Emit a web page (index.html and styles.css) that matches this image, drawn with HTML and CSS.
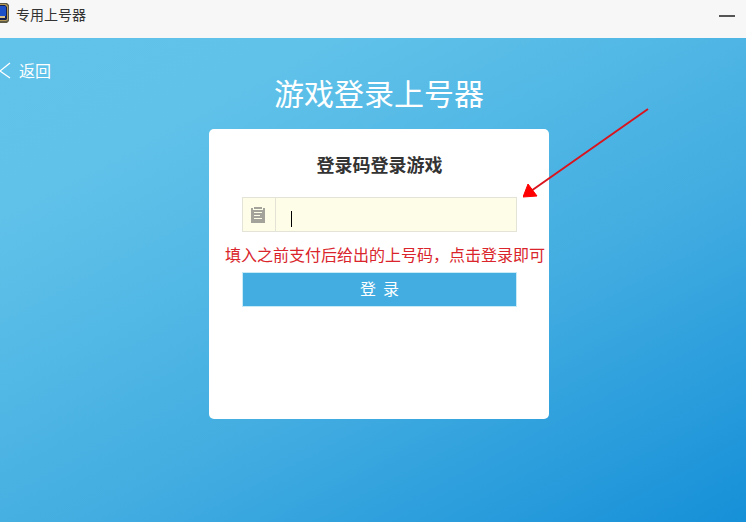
FILE: index.html
```html
<!DOCTYPE html>
<html lang="zh-CN">
<head>
  <meta charset="UTF-8">
  <meta name="viewport" content="width=device-width, initial-scale=1">
  <title>专用上号器</title>
  <link rel="stylesheet" href="styles.css">
</head>
<body>

  <header class="titlebar">
    <svg class="app-icon" width="10" height="22" viewBox="0 0 10 22" aria-hidden="true">
      <path d="M0 1h7l2 2v16l-2 2H0z" fill="#5d5a48"/>
      <path d="M0 2h6l2 2v14l-2 1H0z" fill="#b59a55"/>
      <path d="M0 3h5l2 2v12l-1 1H0z" fill="#15204f"/>
      <path d="M0 4h5l1 1v9H0z" fill="#1c50c8"/>
      <path d="M0 14h5v2H0z" fill="#d8c48a"/>
    </svg>
    <span class="app-name">专用上号器</span>
    <button class="minimize" type="button" aria-label="最小化"></button>
  </header>

  <main class="page">
    <a class="back" href="#">
      <svg width="11" height="18" viewBox="0 0 11 18" aria-hidden="true">
        <path d="M10 2L0 10l10 7" fill="none" stroke="#fff" stroke-width="1.3"/>
      </svg>
      返回
    </a>

    <div class="content">
      <h1>游戏登录上号器</h1>

      <form class="card">
        <h2><label for="code">登录码登录游戏</label></h2>

        <div class="field">
          <span class="field-icon">
            <svg width="16" height="16" viewBox="0 0 16 16" aria-hidden="true">
              <path d="M0 1h2v2h10V1h2v15H0z" fill="#a3a39b"/>
              <path d="M3 0h8v2H3z" fill="#a3a39b"/>
              <path d="M3 5.5h8M3 8.5h6M3 11.5h8" stroke="#fefde8" stroke-width="1.2"/>
            </svg>
          </span>
          <span class="caret"></span>
          <input type="text" id="code" autocomplete="off">
        </div>

        <p class="tip">填入之前支付后给出的上号码，点击登录即可</p>
        <button class="login" type="button">登&nbsp;&nbsp;录</button>

        <!-- 指向输入框的箭头 -->
        <svg class="arrow" width="127" height="90" viewBox="0 0 127 90" aria-hidden="true">
          <path d="M125 1L8 83" stroke="#d9141e" stroke-width="2"/>
          <path d="M0 89L5 76l9 12z" fill="#f00" stroke="#f00"/>
        </svg>
      </form>
    </div>
  </main>

</body>
</html>
```
FILE: styles.css
```css
* {
  box-sizing: border-box;
}

body {
  margin: 0;
  min-height: 100vh;
  display: flex;
  flex-direction: column;
  font-family: "Noto Sans CJK SC", sans-serif;
  font-size: 16px;
  color: #333;
}

h1, h2, p {
  margin: 0;
}

.titlebar {
  display: flex;
  align-items: flex-start;
  height: 38px;
  padding: 2px 11px 0 0;
  background-color: #f7f7f7;
}

.app-name {
  margin-left: 6px;
  padding-top: 2px;
  font-size: 14px;
  line-height: 20px;
}

.minimize {
  width: 16px;
  height: 24px;
  margin-left: auto;
  padding: 0;
  border: none;
  background: linear-gradient(#555, #555) center 13px / 16px 2px no-repeat;
  cursor: pointer;
}

.page {
  flex: 1;
  padding-top: 23px;
  background: linear-gradient(152deg, #61c3ea 0%, #60c2e9 20%, #43ade1 60%, #1690d8 100%);
}

.back {
  display: flex;
  align-items: center;
  gap: 8px;
  width: 60px;
  height: 18px;
  line-height: 18px;
  color: #fff;
  text-decoration: none;
}

.content {
  display: flex;
  flex-direction: column;
  align-items: center;
  padding-left: 12px;
}

h1 {
  margin-bottom: 24px;
  font-size: 30px;
  font-weight: 400;
  line-height: 26px;
  color: #fff;
}

.card {
  position: relative;
  width: 340px;
  max-width: 100%;
  min-height: 290px;
  padding: 23px 32px 24px 33px;
  background-color: #fff;
  border-radius: 5px;
}

h2 {
  font-size: 18px;
  line-height: 24px;
  text-align: center;
}

.field {
  display: flex;
  align-items: center;
  height: 35px;
  margin-top: 21px;
  background-color: #fefde8;
  border: 1px solid #e3e3d8;
}

.field-icon {
  display: flex;
  align-items: center;
  justify-content: center;
  align-self: stretch;
  width: 33px;
  border-right: 1px solid #e3e3d8;
}

.caret {
  width: 1px;
  height: 16px;
  margin: 8px 0 0 15px;
  background-color: #000;
}

.field input {
  flex: 1;
  min-width: 0;
  height: 100%;
  padding: 0 8px;
  border: none;
  outline: none;
  background: none;
  font: inherit;
}

.tip {
  margin: 12px -32px 8px -17px;
  line-height: 20px;
  color: #d9252b;
}

.login {
  display: block;
  width: 100%;
  height: 35px;
  padding: 0 0 3px;
  border: 1px solid #c9eaf7;
  background-color: #43ade1;
  color: #fff;
  font: inherit;
  cursor: pointer;
}

.arrow {
  position: absolute;
  top: -21px;
  right: -101px;
}
```
